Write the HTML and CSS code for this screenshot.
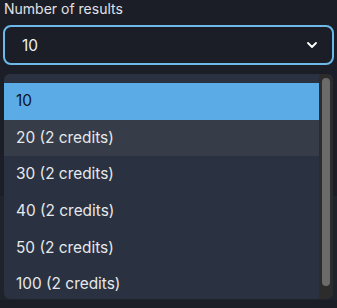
FILE: index.html
```html
<!DOCTYPE html>
<html lang="en">
<head>
<meta charset="utf-8">
<title>Number of results</title>
<link rel="stylesheet" href="styles.css">
</head>
<body>
<div class="page">
  <div class="field">
    <div class="label">Number of results</div>
    <div class="select">
      <span class="value">10</span>
      <svg class="chevron" width="10" height="6" viewBox="0 0 10 6" aria-hidden="true">
        <polyline points="1,1 5,5 9,1" fill="none" stroke="#ffffff" stroke-width="1.8" stroke-linecap="round" stroke-linejoin="round"/>
      </svg>
    </div>
  </div>
  <div class="under"></div>
  <div class="menu">
    <div class="options">
      <div class="option selected">10</div>
      <div class="option hover">20 (2 credits)</div>
      <div class="option">30 (2 credits)</div>
      <div class="option">40 (2 credits)</div>
      <div class="option">50 (2 credits)</div>
      <div class="option">100 (2 credits)</div>
    </div>
    <div class="scrollbar"><div class="thumb"></div></div>
  </div>
</div>
</body>
</html>
```

FILE: styles.css
```css
html, body {
  margin: 0;
  padding: 0;
  background: #1b1e26;
}
body {
  font-family: Inter, "Noto Sans", "Liberation Sans", sans-serif;
  width: 337px;
  height: 308px;
  overflow: hidden;
}
.page {
  position: relative;
  height: 308px;
}
.field {
  padding: 0 3px;
}
.label {
  font-size: 14px;
  line-height: 18px;
  color: #e0e2e6;
  padding-left: 1px;
}
.select {
  margin-top: 7px;
  height: 40px;
  box-sizing: border-box;
  border: 2px solid #6cb9ea;
  border-radius: 8px;
  display: flex;
  align-items: center;
  justify-content: space-between;
  padding: 0 15px 0 17px;
  color: #eef0f3;
  font-size: 15.4px;
}
.value {
  line-height: 20px;
  padding-top: 1px;
}
.chevron {
  display: block;
}
.under {
  margin-top: 131px;
  height: 104px;
  background: #1f232b;
}
.menu {
  position: absolute;
  top: 74px;
  left: 4px;
  right: 4px;
  height: 225px;
  background: #2a3140;
  border-radius: 6px;
  display: flex;
  overflow: hidden;
}
.options {
  flex: 1;
  padding-top: 9px;
}
.option {
  height: 36.7px;
  line-height: 36.7px;
  padding: 0 12px;
  font-size: 15.4px;
  color: #e6e8eb;
  white-space: nowrap;
}
.option.selected {
  background: #5aabe6;
  color: #10141a;
}
.option.hover {
  background: #363c48;
}
.scrollbar {
  width: 14px;
  box-sizing: border-box;
  background: #2c2c2c;
  padding: 4px 3px 13px;
  display: flex;
}
.thumb {
  flex: 1;
  background: #6b6b6b;
  border-radius: 4px;
}
```
